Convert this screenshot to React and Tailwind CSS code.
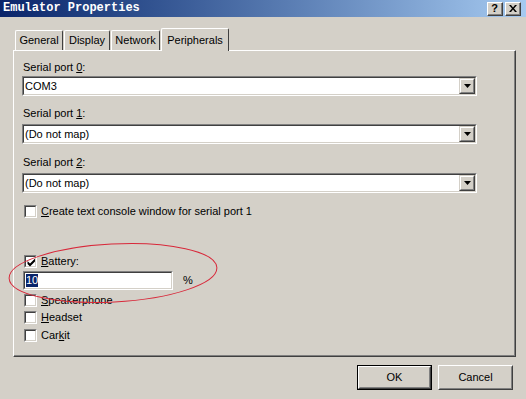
import React from "react";

const font = { fontFamily: '"Liberation Sans", Arial, sans-serif' };

function Sunken({ className = "", children }) {
  return (
    <div className={"border border-t-[#808080] border-l-[#808080] border-b-white border-r-white " + className}>
      <div className="border border-t-[#404040] border-l-[#404040] border-b-[#d4d0c8] border-r-[#d4d0c8] h-full w-full bg-white">
        {children}
      </div>
    </div>
  );
}

function Combo({ value }) {
  return (
    <Sunken className="h-[20px] w-[455px]">
      <div className="flex h-full items-center">
        <div className="flex-1 pl-[1px] text-[11px] leading-[13px] text-black">{value}</div>
        <div className="h-[16px] w-[16px] border border-t-[#d4d0c8] border-l-[#d4d0c8] border-b-[#404040] border-r-[#404040] bg-[#d4d0c8]">
          <div className="flex h-full w-full items-center justify-center border border-t-white border-l-white border-b-[#808080] border-r-[#808080]">
            <svg width="7" height="4" viewBox="0 0 7 4"><path d="M0 0h7L3.5 4z" fill="#000" /></svg>
          </div>
        </div>
      </div>
    </Sunken>
  );
}

function Check({ checked }) {
  return (
    <Sunken className="h-[13px] w-[13px] shrink-0">
      {checked && (
        <svg width="11" height="11" viewBox="0 0 11 11" className="block">
          <path d="M1.5 4l2.5 2.5 5-5v3L4 9.5l-2.5-2.5z" fill="#000" />
        </svg>
      )}
    </Sunken>
  );
}

function CheckRow({ checked, label, u, className = "" }) {
  const idx = label.indexOf(u);
  return (
    <div className={"flex items-center h-[13px] " + className}>
      <Check checked={checked} />
      <span className="ml-[4px] text-[11px] leading-[13px] text-black">
        {label.slice(0, idx)}
        <span className="underline">{u}</span>
        {label.slice(idx + 1)}
      </span>
    </div>
  );
}

function Label({ pre, u, post, className = "" }) {
  return (
    <div className={"ml-[1px] text-[11px] leading-[13px] text-black " + className}>
      {pre}
      <span className="underline">{u}</span>
      {post}
    </div>
  );
}

function Tab({ children, active, className = "" }) {
  return (
    <div
      className={
        "flex items-center justify-center border-t border-l border-t-white border-l-white border-r border-r-[#404040] rounded-t-[2px] text-[11px] text-black bg-[#d4d0c8] " +
        (active ? "h-[23px] -mb-[1px] z-10 px-[6px] relative" : "h-[20px] px-[5px]") +
        " " +
        className
      }
    >
      {children}
    </div>
  );
}

function Button({ children, def }) {
  return (
    <div className={"h-[25px] w-[75px] " + (def ? "border border-black" : "")}>
      <div className="h-full w-full border border-t-white border-l-white border-b-[#404040] border-r-[#404040]">
        <div className="flex h-full w-full items-center justify-center border border-t-[#d4d0c8] border-l-[#d4d0c8] border-b-[#808080] border-r-[#808080] text-[11px] text-black">
          {children}
        </div>
      </div>
    </div>
  );
}

export default function App() {
  return (
    <div className="relative h-[399px] w-[526px] overflow-hidden bg-[#d4d0c8]" style={font}>
      {/* Title bar */}
      <div className="flex h-[17px] items-center justify-between bg-gradient-to-r from-[#0a246a] to-[#a6caf0] pl-[3px] pr-[5px]">
        <span
          className="text-[12px] font-bold leading-[17px] text-white"
          style={{ fontFamily: '"Liberation Mono", "Courier New", monospace' }}
        >
          Emulator Properties
        </span>
        <div className="flex gap-[2px]">
          {["?", "✕"].map((c, i) => (
            <div key={i} className="h-[14px] w-[16px] border border-t-white border-l-white border-b-[#404040] border-r-[#404040] bg-[#d4d0c8]">
              <div className="flex h-full w-full items-center justify-center border-b border-r border-b-[#808080] border-r-[#808080] text-[11px] font-bold leading-none text-black">
                {i === 0 ? (
                  "?"
                ) : (
                  <svg width="8" height="7" viewBox="0 0 8 7"><path d="M0 0h2l2 2.5L6 0h2L5 3.5 8 7H6L4 4.5 2 7H0l3-3.5z" fill="#000" /></svg>
                )}
              </div>
            </div>
          ))}
        </div>
      </div>

      <div className="px-[13px] pt-[11px]">
        {/* Tabs */}
        <div className="flex items-end pl-[2px] h-[22px]">
          <Tab className="w-[48px]">General</Tab>
          <Tab className="w-[46px] ml-[1px]">Display</Tab>
          <Tab className="w-[49px] ml-[1px]">Network</Tab>
          <Tab active className="w-[68px] ml-[1px]">Peripherals</Tab>
        </div>

        {/* Panel */}
        <div className="h-[307px] w-[503px] border border-t-white border-l-white border-b-[#404040] border-r-[#404040]">
          <div className="h-full w-full border-b border-r border-b-[#808080] border-r-[#808080] pl-[8px] pt-[10px]">
            <Label pre="Serial port " u="0" post=":" className="mb-[2px]" />
            <Combo value="COM3" />
            <Label pre="Serial port " u="1" post=":" className="mt-[11px] mb-[4px]" />
            <Combo value="(Do not map)" />
            <Label pre="Serial port " u="2" post=":" className="mt-[12px] mb-[4px]" />
            <Combo value="(Do not map)" />
            <CheckRow label="Create text console window for serial port 1" u="C" className="mt-[12px] ml-[2px]" />
            <CheckRow checked label="Battery:" u="B" className="mt-[37px] ml-[2px]" />
            <div className="mt-[3px] flex items-center">
              <Sunken className="ml-[1px] h-[19px] w-[150px]">
                <div className="flex h-full items-center pl-[1px]">
                  <span className="bg-[#0a246a] px-[0px] text-[11px] leading-[13px] text-white">10</span>
                </div>
              </Sunken>
              <span className="ml-[10px] text-[11px] text-black">%</span>
            </div>
            <CheckRow label="Speakerphone" u="S" className="mt-[4px] ml-[2px]" />
            <CheckRow label="Headset" u="H" className="mt-[4px] ml-[2px]" />
            <CheckRow label="Carkit" u="k" className="mt-[5px] ml-[2px]" />
          </div>
        </div>

        {/* Buttons */}
        <div className="mt-[8px] flex justify-end gap-[6px] pr-[0px]">
          <Button def>OK</Button>
          <Button>Cancel</Button>
        </div>
      </div>

      {/* Red annotation ellipse */}
      <svg className="pointer-events-none absolute left-0 top-0" width="526" height="399">
        <ellipse cx="113" cy="273" rx="104" ry="29" transform="rotate(-3 113 273)" fill="none" stroke="#d8283a" strokeWidth="1" />
      </svg>
    </div>
  );
}
